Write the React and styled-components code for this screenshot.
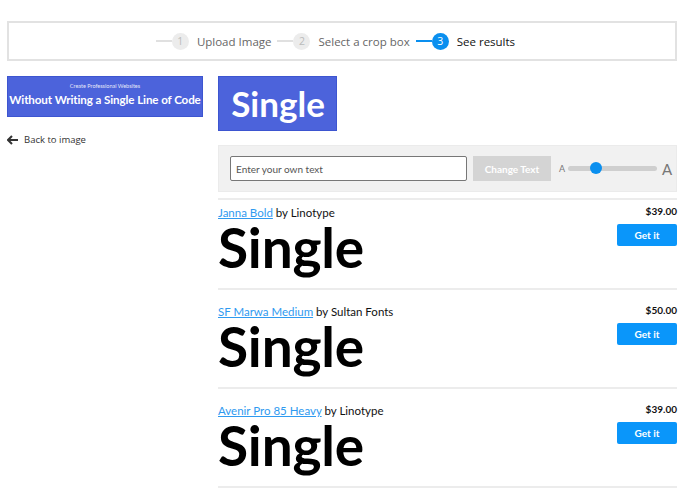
import React from "react";
import styled, { createGlobalStyle } from "styled-components";

const Global = createGlobalStyle`
  html, body { margin: 0; padding: 0; background: #fff; }
  body { font-family: "Lato", "Open Sans", sans-serif; color: #111; }
  * { box-sizing: border-box; }
`;

const Page = styled.div`
  width: 700px;
  padding: 21px 23px 0 7px;
`;

const Steps = styled.div`
  height: 40px;
  border: 2px solid #e2e2e2;
  display: flex;
  align-items: center;
  justify-content: center;
  font-family: "Open Sans", sans-serif;
  font-size: 11.5px;
  padding-right: 7px;
`;

const Step = styled.div`
  display: flex;
  align-items: center;
  margin-right: 6px;
  color: ${(p) => (p.$active ? "#111" : "#666")};
`;

const Line = styled.span`
  width: 16px;
  height: 2px;
  background: ${(p) => (p.$active ? "#0a8fef" : "#e0e0e0")};
`;

const Num = styled.span`
  width: 17px;
  height: 17px;
  border-radius: 50%;
  display: flex;
  align-items: center;
  justify-content: center;
  font-size: 10.5px;
  background: ${(p) => (p.$active ? "#0a8fef" : "#ececec")};
  color: ${(p) => (p.$active ? "#fff" : "#bbb")};
  margin-right: 8px;
`;

const Body = styled.div`
  display: flex;
  gap: 15px;
  margin-top: 15px;
`;

const Side = styled.div`
  width: 196px;
  flex: none;
`;

const Banner = styled.div`
  height: 41px;
  background: #4c63db;
  border: 1px solid #3d55d0;
  display: flex;
  flex-direction: column;
  align-items: center;
  justify-content: center;
  color: #fff;
  font-family: "Lato", sans-serif;
`;

const BannerSmall = styled.div`
  font-size: 5.5px;
  opacity: 0.85;
  margin-top: -4px;
  margin-bottom: 4px;
`;

const BannerBig = styled.div`
  font-size: 11.6px;
  font-weight: 700;
  letter-spacing: -0.1px;
`;

const Back = styled.div`
  margin-top: 16px;
  display: flex;
  align-items: center;
  gap: 6px;
  font-family: "Open Sans", sans-serif;
  font-size: 9.5px;
  color: #333;
`;

const Main = styled.div`
  flex: 1;
  min-width: 0;
`;

const Crop = styled.div`
  width: 119px;
  height: 55px;
  background: #4c63db;
  border: 1px solid #3d55d0;
  overflow: hidden;
  display: flex;
  align-items: center;
  color: #fff;
  font-family: "Lato", sans-serif;
  font-weight: 700;
  font-size: 35px;
  white-space: nowrap;
`;

const CropText = styled.span`
  margin-left: -22px;
  margin-top: -2px;
  word-spacing: 6px;
`;

const Controls = styled.div`
  margin-top: 14px;
  height: 47px;
  background: #f1f1f1;
  border: 1px solid #ebebeb;
  display: flex;
  align-items: center;
  padding: 0 4px 0 11px;
`;

const Input = styled.input`
  width: 237px;
  flex: none;
  height: 25px;
  border: 1px solid #777;
  border-radius: 2px;
  padding: 0 5px;
  font-family: "Lato", sans-serif;
  font-size: 10px;
  color: #333;
  background: #fff;
  &::placeholder { color: #555; }
`;

const GreyButton = styled.button`
  margin-left: 6px;
  width: 78px;
  flex: none;
  height: 25px;
  border: none;
  background: #d4d4d4;
  color: #fff;
  font-family: "Lato", sans-serif;
  font-size: 10px;
  font-weight: 700;
`;

const SizeA = styled.span`
  font-family: "Lato", sans-serif;
  color: #777;
  font-size: ${(p) => p.$size}px;
  margin: ${(p) => p.$m};
`;

const Track = styled.div`
  position: relative;
  width: 89px;
  flex: none;
  height: 5px;
  border-radius: 3px;
  background: #cfcfcf;
`;

const Thumb = styled.div`
  position: absolute;
  top: -4px;
  left: 22px;
  width: 12px;
  height: 12px;
  border-radius: 50%;
  background: #0a8fef;
`;

const Rule = styled.div`
  margin-top: 6px;
  border-top: 2px solid #ececec;
`;

const Row = styled.div`
  display: flex;
  justify-content: space-between;
  padding: ${(p) => (p.$first ? "7px" : "16px")} 0 14px;
  border-bottom: 2px solid #ececec;
`;

const Info = styled.div``;

const Title = styled.div`
  font-family: "Lato", sans-serif;
  font-size: 11.5px;
  height: 14px;
  line-height: 14px;
  margin-top: -1px;
  color: #111;
`;

const Link = styled.a`
  color: #2f9af0;
  text-decoration: underline;
`;

const Sample = styled.div`
  font-family: "Lato", sans-serif;
  font-weight: 700;
  font-size: 55px;
  line-height: 52px;
  height: 53px;
  margin-top: 1px;
  color: #000;
  letter-spacing: -0.2px;
`;

const Buy = styled.div`
  display: flex;
  flex-direction: column;
  align-items: flex-end;
`;

const Price = styled.div`
  font-family: "Lato", sans-serif;
  font-weight: 700;
  font-size: 10px;
  line-height: 12px;
  margin-top: -2px;
`;

const GetIt = styled.button`
  margin-top: 7px;
  width: 60px;
  height: 22px;
  border: none;
  border-radius: 2px;
  background: #0a96fa;
  color: #fff;
  font-family: "Lato", sans-serif;
  font-weight: 700;
  font-size: 10px;
`;

const fonts = [
  { name: "Janna Bold", by: "Linotype", price: "$39.00" },
  { name: "SF Marwa Medium", by: "Sultan Fonts", price: "$50.00" },
  { name: "Avenir Pro 85 Heavy", by: "Linotype", price: "$39.00" },
];

export default function App() {
  return (
    <>
      <Global />
      <Page>
        <Steps>
          <Step>
            <Line />
            <Num>1</Num>Upload Image
          </Step>
          <Step>
            <Line />
            <Num>2</Num>Select a crop box
          </Step>
          <Step $active>
            <Line $active />
            <Num $active>3</Num>See results
          </Step>
        </Steps>
        <Body>
          <Side>
            <Banner>
              <BannerSmall>Create Professional Websites</BannerSmall>
              <BannerBig>Without Writing a Single Line of Code</BannerBig>
            </Banner>
            <Back>
              <svg width="11" height="10" viewBox="0 0 11 10">
                <path d="M5 1 L1 5 L5 9 M1 5 H11" stroke="#333" strokeWidth="2" fill="none" />
              </svg>
              Back to image
            </Back>
          </Side>
          <Main>
            <Crop>
              <CropText>n Single</CropText>
            </Crop>
            <Controls>
              <Input placeholder="Enter your own text" />
              <GreyButton>Change Text</GreyButton>
              <SizeA $size={9} $m="0 3px 0 8px">A</SizeA>
              <Track>
                <Thumb />
              </Track>
              <SizeA $size={15} $m="0 0 0 5px">A</SizeA>
            </Controls>
            <Rule />
            {fonts.map((f, i) => (
              <Row key={f.name} $first={i === 0}>
                <Info>
                  <Title>
                    <Link>{f.name}</Link> by {f.by}
                  </Title>
                  <Sample>Single</Sample>
                </Info>
                <Buy>
                  <Price>{f.price}</Price>
                  <GetIt>Get it</GetIt>
                </Buy>
              </Row>
            ))}
          </Main>
        </Body>
      </Page>
    </>
  );
}
